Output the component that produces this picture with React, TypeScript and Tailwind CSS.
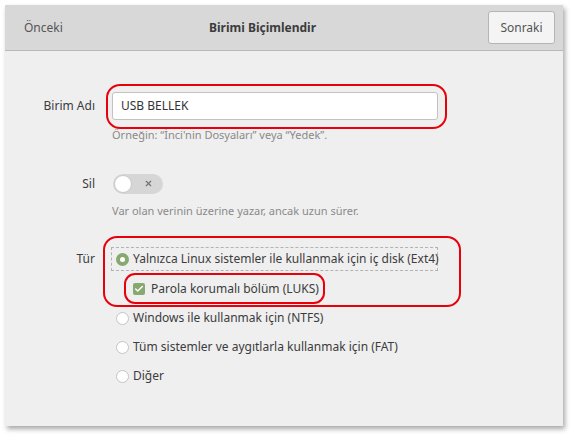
import { X, Check } from 'lucide-react';

function Radio({ checked }: { checked?: boolean }) {
  if (checked) {
    return (
      <span className="w-[13px] h-[13px] rounded-full bg-[#87a86f] flex items-center justify-center shrink-0">
        <span className="w-[5px] h-[5px] rounded-full bg-white" />
      </span>
    );
  }
  return <span className="w-[13px] h-[13px] rounded-full bg-white border border-[#c4c4c4] shrink-0" />;
}

export default function App() {
  const font = { fontFamily: '"Noto Sans", "DejaVu Sans", sans-serif' };
  return (
    <div className="w-[572px] h-[435px] bg-white pt-[5px] pl-[5px]" style={font}>
      <div className="w-[558px] h-[421px] bg-[#efefef] shadow-[2px_3px_5px_rgba(0,0,0,0.35)] flex flex-col text-[#3c3c3c]">
        {/* Header */}
        <div className="h-[46px] shrink-0 bg-[#d8d8d8] border-b border-[#b9b9b9] flex items-center pl-[19px] pr-[8px] text-[12px]">
          <span className="w-[185px] text-[#555]">Önceki</span>
          <span className="font-bold">Birimi Biçimlendir</span>
          <div className="flex-1 flex justify-end">
            <button className="w-[67px] h-[33px] bg-[#f4f4f4] border border-[#b4b4b4] rounded-[3px] text-[#555]">
              Sonraki
            </button>
          </div>
        </div>

        {/* Body */}
        <div className="flex flex-col text-[12px]">
          {/* Birim Adı */}
          <div className="flex items-center mt-[41px]">
            <span className="w-[90px] text-right">Birim Adı</span>
            <div className="relative ml-[17px]">
              <div className="w-[326px] h-[28px] bg-white border border-[#c2c2c2] rounded-[3px] flex items-center px-[8px] text-[#333]">
                USB BELLEK
              </div>
              <div className="absolute left-[-6px] top-[-8px] w-[341px] h-[45px] border-2 border-[#e8000b] rounded-[14px]" />
            </div>
          </div>
          <div className="ml-[107px] mt-[7px] text-[11px] text-[#8a8a8a]">
            Örneğin: “İnci'nin Dosyaları” veya “Yedek”.
          </div>

          {/* Sil */}
          <div className="flex items-center mt-[30px]">
            <span className="w-[90px] text-right">Sil</span>
            <div className="ml-[18px] w-[50px] h-[20px] rounded-full bg-[#d6d6d6] flex items-center justify-between pl-[1px] pr-[10px]">
              <span className="w-[18px] h-[18px] rounded-full bg-white border border-[#c8c8c8]" />
              <X className="w-[9px] h-[9px] text-[#707070]" strokeWidth={3} />
            </div>
          </div>
          <div className="ml-[107px] mt-[9px] text-[11px] text-[#8a8a8a]">
            Var olan verinin üzerine yazar, ancak uzun sürer.
          </div>

          {/* Tür */}
          <div className="flex items-start mt-[28px]">
            <span className="w-[90px] text-right leading-[24px]">Tür</span>
            <div className="ml-[16px] relative flex flex-col">
              <div className="absolute left-[-8px] top-[-11px] w-[358px] h-[71px] border-2 border-[#e8000b] rounded-[14px]" />
              <div className="h-[24px] w-[327px] border border-dashed border-[#b3b3b3] flex items-center gap-[4px] pl-[4px]">
                <Radio checked />
                <span className="whitespace-nowrap">Yalnızca Linux sistemler ile kullanmak için iç disk (Ext4)</span>
              </div>
              <div className="relative flex items-center gap-[6px] ml-[22px] mt-[10px] h-[16px]">
                <div className="absolute left-[-9px] top-[-8px] w-[201px] h-[31px] border-2 border-[#e8000b] rounded-[11px]" />
                <span className="w-[12px] h-[12px] rounded-[2px] bg-[#87a86f] flex items-center justify-center">
                  <Check className="w-[10px] h-[10px] text-white" strokeWidth={3.5} />
                </span>
                <span>Parola korumalı bölüm (LUKS)</span>
              </div>
              <div className="flex flex-col gap-[13px] mt-[13px] pl-[5px]">
                <div className="flex items-center gap-[4px] h-[16px]">
                  <Radio />
                  <span>Windows ile kullanmak için (NTFS)</span>
                </div>
                <div className="flex items-center gap-[4px] h-[16px]">
                  <Radio />
                  <span>Tüm sistemler ve aygıtlarla kullanmak için (FAT)</span>
                </div>
                <div className="flex items-center gap-[4px] h-[16px]">
                  <Radio />
                  <span>Diğer</span>
                </div>
              </div>
            </div>
          </div>
        </div>
      </div>
    </div>
  );
}
